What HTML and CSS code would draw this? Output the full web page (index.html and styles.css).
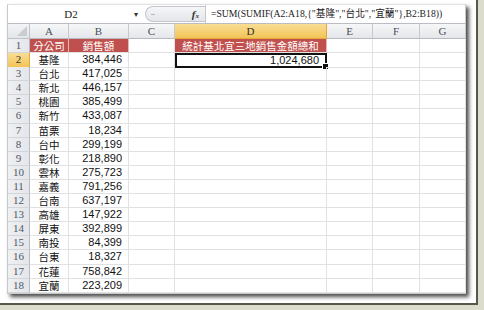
FILE: index.html
```html
<!DOCTYPE html>
<html lang="zh-Hant">
<head>
  <meta charset="UTF-8">
  <title>SUMIF 陣列加總</title>
  <link rel="stylesheet" href="styles.css">
</head>
<body>
  <div class="frame">
    <div class="sheet">
      <div class="formula-bar">
        <div class="name-box">D2</div>
        <div class="name-arrow">▾</div>
        <div class="tools">
          <span class="dash"></span>
          <div class="fx"><i>f</i><span>x</span></div>
        </div>
        <div class="formula">=SUM(SUMIF(A2:A18,{"基隆","台北","宜蘭"},B2:B18))</div>
      </div>
      <div class="grid" id="grid">
        <div class="row heads">
          <div class="corner"><span class="tri"></span></div>
          <div class="head">A</div>
          <div class="head">B</div>
          <div class="head">C</div>
          <div class="head active">D</div>
          <div class="head">E</div>
          <div class="head">F</div>
          <div class="head">G</div>
        </div>
        <div class="row">
          <div class="rh">1</div>
          <div class="cell title">分公司</div>
          <div class="cell title">銷售額</div>
          <div class="cell"></div>
          <div class="cell title">統計基北宜三地銷售金額總和</div>
          <div class="cell"></div>
          <div class="cell"></div>
          <div class="cell"></div>
        </div>
      </div>
    </div>
  </div>

  <script>
    const data = [
      ["基隆", "384,446"], ["台北", "417,025"], ["新北", "446,157"], ["桃園", "385,499"],
      ["新竹", "433,087"], ["苗栗", "18,234"], ["台中", "299,199"], ["彰化", "218,890"],
      ["雲林", "275,723"], ["嘉義", "791,256"], ["台南", "637,197"], ["高雄", "147,922"],
      ["屏東", "392,899"], ["南投", "84,399"], ["台東", "18,327"], ["花蓮", "758,842"],
      ["宜蘭", "223,209"]
    ];

    const grid = document.getElementById("grid");
    data.forEach((d, i) => {
      const n = i + 2;
      const row = document.createElement("div");
      row.className = "row";
      const sel = n === 2;
      row.innerHTML =
        `<div class="rh${sel ? " active" : ""}">${n}</div>` +
        `<div class="cell name">${d[0]}</div>` +
        `<div class="cell num">${d[1]}</div>` +
        `<div class="cell"></div>` +
        (sel ? `<div class="cell num selected">1,024,680<span class="handle"></span></div>` : `<div class="cell"></div>`) +
        `<div class="cell"></div><div class="cell"></div><div class="cell"></div>`;
      grid.appendChild(row);
    });
  </script>
</body>
</html>
```

FILE: styles.css
```css
body { margin: 0; background: #dcdccc; width: 484px; height: 310px; overflow: hidden; }
.frame { width: 478px; height: 305px; background: #fff; border-right: 2px solid #56584c; border-bottom: 2px solid #56584c; padding: 4px 0 0 7px; box-sizing: border-box; }
.sheet { width: 459px; background: #fff; border: 1px solid #c9c9c9; border-top-color: #e2e2e2; box-shadow: 3px 3px 4px rgba(0, 0, 0, 0.7); box-sizing: border-box; }

.formula-bar { display: flex; align-items: center; height: 18px; border-bottom: 1px solid #b9bcc2; font-family: "Liberation Serif", "Noto Sans CJK TC", serif; font-size: 11px; color: #222; }
.name-box { width: 126px; text-align: center; }
.name-arrow { width: 11px; font-size: 8px; color: #333; }
.tools { width: 60px; height: 16px; box-sizing: border-box; display: flex; align-items: center; justify-content: space-between; padding: 0 6px 0 5px; background: linear-gradient(#f5f6f8, #e4e6ea); border: 1px solid #c3c6cc; border-right: none; border-radius: 8px 0 0 8px; }
.dash { width: 4px; height: 1px; background: #b4b7bc; }
.fx { font-size: 11px; font-weight: bold; color: #333; }
.fx span { font-size: 7px; font-style: italic; }
.formula { flex: 1; height: 18px; line-height: 18px; border-left: 1px solid #c4c7cc; padding-left: 5px; font-size: 9.7px; white-space: nowrap; }

.row { display: grid; grid-template-columns: 22px 39px 60px 46px 152px 46px 47px 46px; height: 14.1px; }
.row.heads { height: 15px; }

.corner { background: linear-gradient(#f3f4f6, #e3e5e9); border-right: 1px solid #bfc3c9; border-bottom: 1px solid #bfc3c9; position: relative; }
.tri { position: absolute; right: 2px; bottom: 2px; width: 0; height: 0; border-left: 10px solid transparent; border-bottom: 10px solid #c9ccd1; }
.head { background: linear-gradient(#f6f7f8, #e4e6ea); border-right: 1px solid #c6c9ce; border-bottom: 1px solid #b6b9bf; font-family: "Liberation Serif", serif; font-size: 11px; line-height: 14px; text-align: center; color: #4a4f58; }
.rh { background: linear-gradient(90deg, #eef0f2, #e4e6ea); border-right: 1px solid #b6b9bf; border-bottom: 1px solid #d2d5d9; font-family: "Liberation Serif", serif; font-size: 11px; line-height: 13px; text-align: center; color: #4f5766; }
.head.active, .rh.active { background: linear-gradient(#f9dd95, #f2c455); border-color: #e3a93a; color: #333; }

.cell { border-right: 1px solid #dfe1e3; border-bottom: 1px solid #dfe1e3; font-family: "Noto Sans CJK TC", sans-serif; font-size: 10.5px; line-height: 13px; color: #111; white-space: nowrap; overflow: hidden; position: relative; }
.cell.title { background: #c0504d; color: #fff; text-align: center; border-right-color: #e8b6b4; border-bottom-color: #e3e3e3; }
.cell.name { text-align: center; }
.cell.num { text-align: right; padding-right: 6px; font-family: "Liberation Sans", sans-serif; font-size: 11px; }
.cell.selected { border: 2px solid #111; line-height: 11px; overflow: visible; }
.handle { position: absolute; right: -4px; bottom: -4px; width: 5px; height: 5px; background: #111; border: 1px solid #fff; }
```
